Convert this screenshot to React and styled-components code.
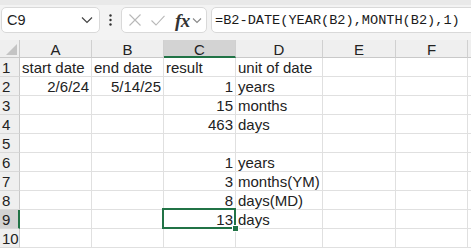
import React from "react";
import styled, { createGlobalStyle } from "styled-components";

const Global = createGlobalStyle`
  html, body { margin: 0; padding: 0; background: #fff; overflow: hidden; }
  * { box-sizing: border-box; }
`;

const Page = styled.div`
  width: 471px;
  height: 248px;
  overflow: hidden;
  font-family: "Liberation Sans", Arial, sans-serif;
  color: #222;
  position: relative;
`;

const Toolbar = styled.div`
  height: 40px;
  background: #f3f3f3;
  border-top: 5px solid #e9e9e9;
  display: flex;
  align-items: flex-start;
  padding: 2px 0 0 1px;
`;

const Box = styled.div`
  height: 26px;
  background: #fff;
  border: 1px solid #d9d9d9;
  border-radius: 5px;
  display: flex;
  align-items: center;
`;

const NameBox = styled(Box)`
  width: 99px;
  padding: 0 6px 0 5px;
  justify-content: space-between;
  font-size: 14.5px;
  color: #222;
`;

const Dots = styled.div`
  width: 21px;
  display: flex;
  justify-content: center;
  align-items: center;
  height: 26px;
`;

const FxBox = styled(Box)`
  width: 86px;
  padding: 0 0 0 7px;
`;

const FxLabel = styled.span`
  margin-left: 10px;
  font-family: "Liberation Serif", "DejaVu Serif", serif;
  font-style: italic;
  font-weight: 600;
  font-size: 19px;
  color: #333;
  line-height: 1;
  letter-spacing: -0.5px;
`;

const FormulaBox = styled(Box)`
  flex: 1;
  margin-left: 4px;
  margin-right: -10px;
  padding-left: 3px;
  font-family: "Liberation Mono", "DejaVu Sans Mono", monospace;
  font-size: 13.6px;
  color: #1a1a1a;
  white-space: nowrap;
`;

const Grid = styled.div`
  display: grid;
  grid-template-columns: 20px 72px 72px 72px 87px 73px 72px 40px;
  grid-template-rows: 18px repeat(10, 19px);
  font-size: 15px;
`;

const Corner = styled.div`
  background: #efefef;
  border-right: 1px solid #c9c9c9;
  border-bottom: 1px solid #c9c9c9;
  position: relative;
`;

const ColHead = styled.div`
  background: ${(p) => (p.$active ? "#d3d3d3" : "#efefef")};
  border-right: 1px solid #d0d0d0;
  border-bottom: ${(p) => (p.$active ? "2px solid #217346" : "1px solid #c9c9c9")};
  display: flex;
  align-items: center;
  justify-content: center;
  line-height: 1;
  padding-top: ${(p) => (p.$active ? "2px" : "1px")};
  color: #222;
`;

const RowHead = styled.div`
  background: ${(p) => (p.$active ? "#d3d3d3" : "#efefef")};
  border-right: ${(p) => (p.$active ? "2px solid #217346" : "1px solid #c9c9c9")};
  border-bottom: 1px solid #d9d9d9;
  display: flex;
  align-items: center;
  padding-left: 2px;
  line-height: 1;
  color: #222;
`;

const Cell = styled.div`
  border-right: 1px solid #e0e0e0;
  border-bottom: 1px solid #e0e0e0;
  display: flex;
  align-items: center;
  justify-content: ${(p) => (p.$num ? "flex-end" : "flex-start")};
  padding: 0 2px;
  white-space: nowrap;
  line-height: 1;
  position: relative;
  z-index: ${(p) => (p.$selected ? 2 : "auto")};
`;

const Selection = styled.div`
  position: absolute;
  left: -2px;
  top: -2px;
  right: -1px;
  bottom: -1px;
  border: 2px solid #217346;
  pointer-events: none;
`;

const Handle = styled.div`
  position: absolute;
  right: -5px;
  bottom: -5px;
  width: 7px;
  height: 7px;
  background: #217346;
  border: 1px solid #fff;
`;

const Icon = styled.svg`
  display: block;
  flex: none;
`;

const cols = ["A", "B", "C", "D", "E", "F", "G"];

const data = {
  1: ["start date", "end date", "result", "unit of date"],
  2: ["2/6/24", "5/14/25", "1", "years"],
  3: ["", "", "15", "months"],
  4: ["", "", "463", "days"],
  5: ["", "", "", ""],
  6: ["", "", "1", "years"],
  7: ["", "", "3", "months(YM)"],
  8: ["", "", "8", "days(MD)"],
  9: ["", "", "13", "days"],
  10: ["", "", "", ""],
};

const isNum = (r, c) => r > 1 && c < 3;

export default function App() {
  return (
    <Page>
      <Global />
      <Toolbar>
        <NameBox>
          <span>C9</span>
          <Icon width="12" height="8" viewBox="0 0 12 8">
            <path d="M1 1.5 L6 6.5 L11 1.5" fill="none" stroke="#444" strokeWidth="1.2" />
          </Icon>
        </NameBox>
        <Dots>
          <Icon width="3" height="12" viewBox="0 0 3 12">
            <circle cx="1.5" cy="1.5" r="1.2" fill="#333" />
            <circle cx="1.5" cy="6" r="1.2" fill="#333" />
            <circle cx="1.5" cy="10.5" r="1.2" fill="#333" />
          </Icon>
        </Dots>
        <FxBox>
          <Icon width="12" height="12" viewBox="0 0 12 12">
            <path d="M0.5 0.5 L11.5 11.5 M11.5 0.5 L0.5 11.5" stroke="#b8b8b8" strokeWidth="1.1" fill="none" />
          </Icon>
          <Icon width="14" height="11" viewBox="0 0 14 11" style={{ marginLeft: 10 }}>
            <path d="M0.5 5.5 L5 10 L13.5 0.8" stroke="#b8b8b8" strokeWidth="1.1" fill="none" />
          </Icon>
          <FxLabel>fx</FxLabel>
          <Icon width="10" height="7" viewBox="0 0 10 7" style={{ marginLeft: 2 }}>
            <path d="M1 1.5 L5 5.5 L9 1.5" fill="none" stroke="#888" strokeWidth="1.1" />
          </Icon>
        </FxBox>
        <FormulaBox>=B2-DATE(YEAR(B2),MONTH(B2),1)</FormulaBox>
      </Toolbar>
      <Grid>
        <Corner>
          <Icon
            width="11"
            height="11"
            viewBox="0 0 11 11"
            style={{ position: "absolute", right: 2, bottom: 2 }}
          >
            <path d="M11 0 L11 11 L0 11 Z" fill="#c4c4c4" />
          </Icon>
        </Corner>
        {cols.map((c) => (
          <ColHead key={c} $active={c === "C"}>
            {c === "G" ? "" : c}
          </ColHead>
        ))}
        {Object.keys(data).map((rk) => {
          const r = Number(rk);
          return (
            <React.Fragment key={r}>
              <RowHead $active={r === 9}>{r}</RowHead>
              {cols.map((c, ci) => {
                const sel = r === 9 && c === "C";
                return (
                  <Cell key={c} $num={isNum(r, ci)} $selected={sel}>
                    {data[r][ci] || ""}
                    {sel && (
                      <Selection>
                        <Handle />
                      </Selection>
                    )}
                  </Cell>
                );
              })}
            </React.Fragment>
          );
        })}
      </Grid>
    </Page>
  );
}
